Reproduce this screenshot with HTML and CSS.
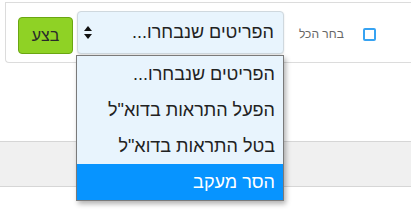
FILE: index.html
```html
<!DOCTYPE html>
<html lang="he" dir="rtl">
<head>
    <meta charset="UTF-8">
    <title>פעולות מרובות</title>
    <link rel="stylesheet" href="styles.css">
</head>
<body>

    <div class="bulk-bar">
        <label class="select-all">
            <span class="check-box"></span>
            <span class="check-label">בחר הכל</span>
        </label>
        <div class="action-select">
            <span class="select-text">הפריטים שנבחרו...</span>
            <svg class="select-arrows" width="8" height="14" viewBox="0 0 8 14">
                <path d="M4 0 L8 5 L0 5 Z" fill="#111"/>
                <path d="M0 8 L8 8 L4 13 Z" fill="#111"/>
            </svg>
        </div>
        <button class="go-btn">בצע</button>
    </div>

    <div class="gap-row"></div>
    <div class="gray-row"></div>

    <!-- open options list of the select -->
    <ul class="options-menu">
        <li>הפריטים שנבחרו...</li>
        <li>הפעל התראות בדוא"ל</li>
        <li>בטל התראות בדוא"ל</li>
        <li class="active">הסר מעקב</li>
    </ul>

</body>
</html>
```

FILE: styles.css
```css
/* Bulk actions row with an open dropdown */
html, body {
    margin: 0;
    overflow: hidden;
}

body {
    font-family: "Liberation Sans", "DejaVu Sans", Arial, sans-serif;
    background-color: #fff;
    color: #222;
    padding-top: 2px;
    position: relative;
    height: 210px;
}

.bulk-bar {
    display: flex;
    justify-content: flex-end;
    align-items: flex-start;
    height: 59px;
    margin-left: 5px;
    margin-right: -20px;
    padding-left: 12px;
    border: 1px solid #dcdcdc;
    border-right: none;
    border-radius: 0 0 0 4px;
}

.select-all {
    display: flex;
    align-items: center;
    white-space: nowrap;
    margin-top: 24px;
}

.check-box {
    width: 9px;
    height: 9px;
    border: 2px solid #37a3f2;
    border-radius: 2px;
    background-color: #fff;
}

.check-label {
    font-size: 12px;
    color: #666;
    margin-right: 19px;
}

.action-select {
    display: flex;
    align-items: center;
    justify-content: space-between;
    box-sizing: border-box;
    width: 207px;
    height: 43px;
    margin-top: 8px;
    margin-right: 15px;
    padding: 0 9px 0 6px;
    background-color: #e8f4fd;
    border: 1px solid #cfd8de;
    border-radius: 4px;
    box-shadow: 0 1px 2px rgba(0, 0, 0, 0.12);
}

.select-text {
    font-size: 18px;
    color: #222;
}

.go-btn {
    box-sizing: border-box;
    width: 55px;
    height: 37px;
    margin-top: 14px;
    margin-right: 4px;
    padding: 0;
    font-family: inherit;
    font-size: 16px;
    color: #2a2a2a;
    background-color: #8fd225;
    border: 1px solid #6aa612;
    border-radius: 4px;
}

.gap-row {
    height: 78px;
}

.gray-row {
    height: 44px;
    background-color: #f0f0f0;
    border-top: 1px solid #d6d6d6;
    border-bottom: 1px solid #d6d6d6;
}

.options-menu {
    position: absolute;
    left: 76px;
    top: 55px;
    width: 206px;
    margin: 0;
    padding: 0;
    list-style: none;
    background-color: #e8f4fd;
    border: 1px solid #7a7a7a;
    box-shadow: 2px 3px 5px rgba(0, 0, 0, 0.3);
}

.options-menu li {
    height: 36px;
    line-height: 36px;
    padding-right: 8px;
    font-size: 18px;
    color: #222;
}

.options-menu li.active {
    background-color: #0794ff;
    color: #fff;
}
```
